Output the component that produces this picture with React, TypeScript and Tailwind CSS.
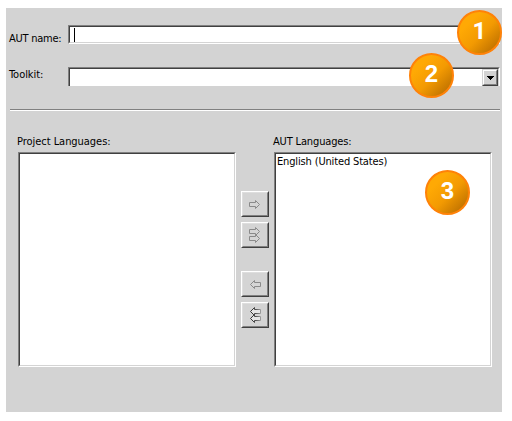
import type { ReactNode } from 'react';

const SUNKEN =
  'border border-t-[#808080] border-l-[#808080] border-b-white border-r-white';
const SUNKEN_INNER =
  'h-full w-full border border-t-[#404040] border-l-[#404040] border-b-[#d4d4d4] border-r-[#d4d4d4] bg-white';

function Sunken({ className, children }: { className: string; children?: ReactNode }) {
  return (
    <div className={`${SUNKEN} ${className}`}>
      <div className={SUNKEN_INNER}>{children}</div>
    </div>
  );
}

function Badge({ n, className }: { n: number; className: string }) {
  return (
    <div
      className={`absolute flex size-[45px] items-center justify-center rounded-full border-2 border-[#ff8208] bg-linear-135 from-[#ffa904] from-25% via-[#f39a02] via-55% to-[#b86c00] to-95% text-[24px] leading-none font-bold text-white ${className}`}
    >
      <span className="-mt-1">{n}</span>
    </div>
  );
}

const RIGHT = 'M.5 2.5h6v-2l4 4l-4 4v-2h-6z';
const LEFT = 'M10.5 2.5h-6v-2l-4 4l4 4v-2h6z';

function MoveButton({ left, all, label }: { left?: boolean; all?: boolean; label: string }) {
  const d = left ? LEFT : RIGHT;
  const dark = left && all;
  const stroke = dark ? 'url(#fade)' : '#8a8a8a';
  const fill = dark ? '#e6e6e6' : '#d6d6d6';
  return (
    <button
      aria-label={label}
      className="block h-[26px] w-7 border border-t-white border-l-white border-r-[#404040] border-b-[#404040] bg-[#d4d4d4]"
    >
      <span
        className={`flex h-full w-full items-center justify-center border border-t-[#dedede] border-l-[#dedede] border-r-[#808080] border-b-[#808080] ${left ? 'pl-px' : 'pr-px'}`}
      >
        {all ? (
          <svg width="11" height="16" viewBox="0 0 11 16" fill={fill} stroke={stroke}>
            <defs>
              <linearGradient id="fade" x1="0" x2="1" y1="0" y2="0">
                <stop offset="0" stopColor="#303030" />
                <stop offset="0.45" stopColor="#484848" />
                <stop offset="1" stopColor="#999999" />
              </linearGradient>
            </defs>
            <path d={d} />
            <path d={d} transform="translate(0 7)" />
          </svg>
        ) : (
          <svg width="11" height="9" viewBox="0 0 11 9" fill={fill} stroke={stroke}>
            <path d={d} />
          </svg>
        )}
      </span>
    </button>
  );
}

export default function App() {
  return (
    <div className="h-[421px] w-[512px] bg-white pt-2 pl-1.5 font-['DejaVu_Sans_Condensed','DejaVu_Sans',Tahoma,sans-serif] text-[11px] leading-[13px] text-black">
      <div className="relative h-[404px] w-[496px] bg-[#d3d3d3]">
        <div className="flex h-[59px] pt-[17px] pl-1">
          <label className="-ml-px w-[59px] pt-[7px] tracking-[-0.25px] whitespace-nowrap">AUT name:</label>
          <Sunken className="h-[19px] w-[432px]">
            <div className="ml-1 h-[14px] w-px translate-y-px bg-black" />
          </Sunken>
        </div>
        <div className="flex h-[42px] pl-1">
          <label className="-ml-px w-[59px] pt-px tracking-[-0.05px] whitespace-nowrap">Toolkit:</label>
          <div className="h-[19px] w-[432px] border-t border-r border-l border-t-[#808080] border-r-white border-l-[#808080]">
            <div className="flex h-full justify-end border-t border-r border-l border-t-[#404040] border-r-[#d4d4d4] border-l-[#404040] bg-white">
              <div className="h-full w-4 border border-t-[#d3d3d3] border-r-[#404040] border-b-[#404040] border-l-[#d3d3d3]">
                <div className="flex h-full items-center justify-center border border-t-white border-r-[#808080] border-b-[#808080] border-l-white bg-[#d3d3d3]">
                  <svg width="7" height="4" viewBox="0 0 7 4" shapeRendering="crispEdges">
                    <path d="M0 0h7v1h-1v1h-1v1h-1v1h-1v-1h-1v-1h-1v-1h-1z" />
                  </svg>
                </div>
              </div>
            </div>
          </div>
        </div>
        <div className="mr-0.5 ml-1 h-0.5 border-t border-b border-t-[#808080] border-b-white" />
        <div className="flex pt-6 pl-3">
          <div>
            <div className="-ml-px h-[17px] tracking-[-0.04px] whitespace-nowrap">Project Languages:</div>
            <Sunken className="h-[215px] w-[218px]" />
          </div>
          <div className="flex w-[38px] flex-col items-center pt-14">
            <MoveButton label="Add" />
            <div className="h-[5px]" />
            <MoveButton all label="Add all" />
            <div className="h-[23px]" />
            <MoveButton left label="Remove" />
            <div className="h-[5px]" />
            <MoveButton left all label="Remove all" />
          </div>
          <div>
            <div className="-ml-px h-[17px] tracking-[-0.15px] whitespace-nowrap">AUT Languages:</div>
            <Sunken className="h-[215px] w-[218px]">
              <div className="pt-px pl-px tracking-[-0.15px] whitespace-nowrap">English (United States)</div>
            </Sunken>
          </div>
        </div>
        <Badge n={1} className="top-0.5 left-[451px] font-['Roboto',sans-serif]" />
        <Badge n={2} className="top-[45px] left-[403px] font-['Liberation_Sans',Arial,sans-serif]" />
        <Badge n={3} className="top-[162px] left-[419px] font-['Liberation_Sans',Arial,sans-serif]" />
      </div>
    </div>
  );
}
